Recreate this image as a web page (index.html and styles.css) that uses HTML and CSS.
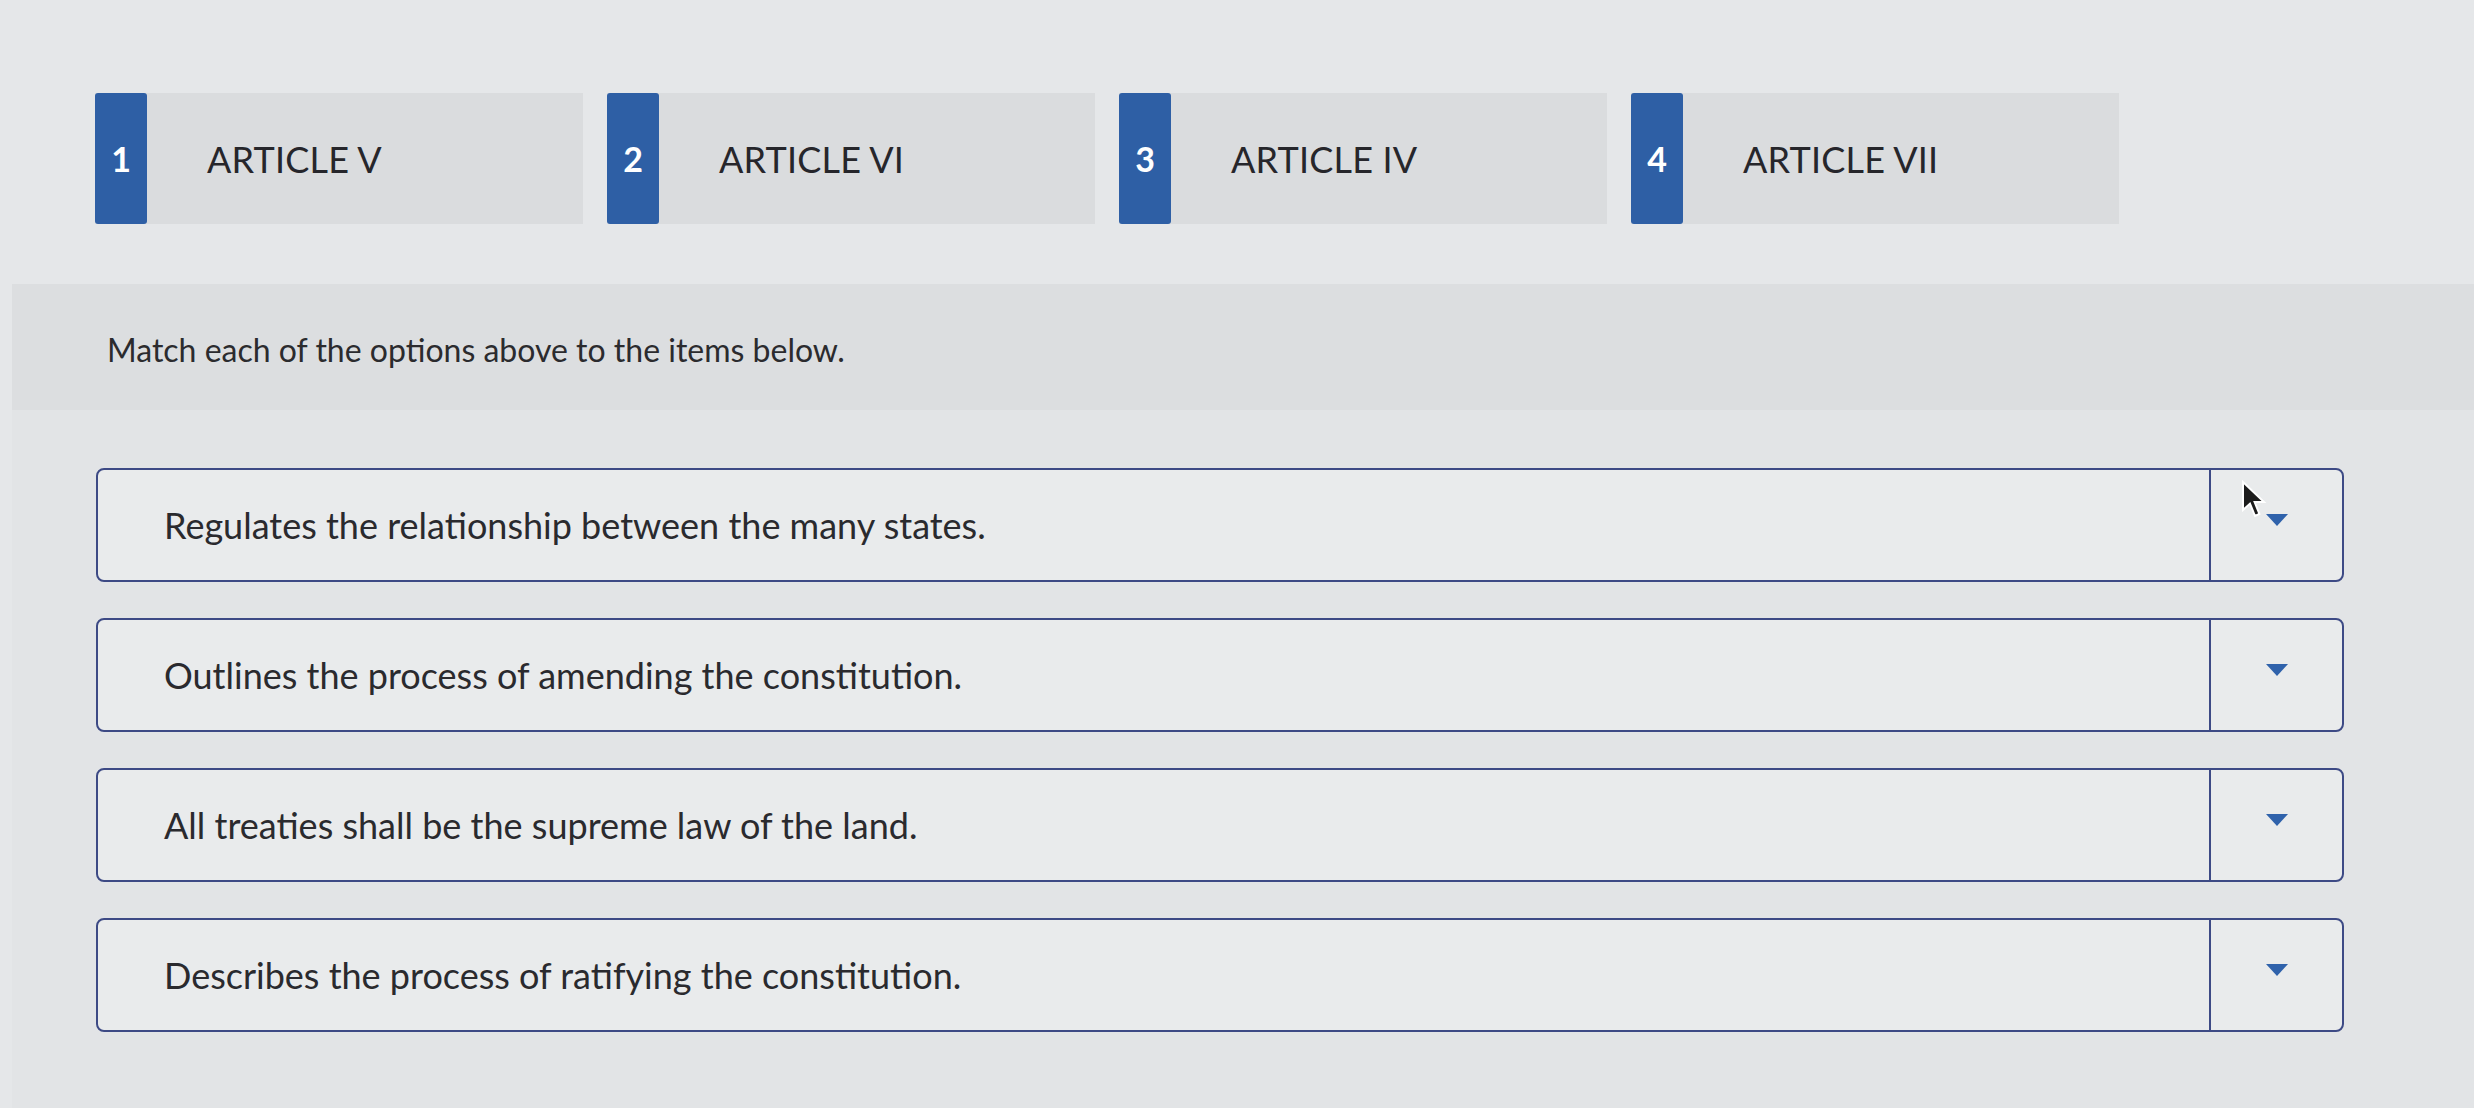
FILE: index.html
```html
<!DOCTYPE html>
<html lang="en">
<head>
<meta charset="utf-8">
<title>Matching</title>
<link rel="stylesheet" href="styles.css">
</head>
<body>
<div class="page">
  <div class="choices">
    <div class="choice"><span class="badge">1</span><span class="label">ARTICLE V</span></div>
    <div class="choice"><span class="badge">2</span><span class="label">ARTICLE VI</span></div>
    <div class="choice"><span class="badge">3</span><span class="label">ARTICLE IV</span></div>
    <div class="choice"><span class="badge">4</span><span class="label">ARTICLE VII</span></div>
  </div>
  <section class="panel">
    <div class="prompt">Match each of the options above to the items below.</div>
    <div class="rows">
      <div class="row">
        <div class="row-text">Regulates the relationship between the many states.</div>
        <div class="drop"><span class="tri"></span>
          <svg class="cursor" width="26" height="40" viewBox="0 0 13 20"><path d="M1 1 L1 15 L4.5 11.8 L7 18 L9.2 17 L6.8 11 L11.5 11 Z" fill="#1c1c1c" stroke="#ffffff" stroke-width="1"/></svg>
        </div>
      </div>
      <div class="row">
        <div class="row-text">Outlines the process of amending the constitution.</div>
        <div class="drop"><span class="tri"></span></div>
      </div>
      <div class="row">
        <div class="row-text">All treaties shall be the supreme law of the land.</div>
        <div class="drop"><span class="tri"></span></div>
      </div>
      <div class="row">
        <div class="row-text">Describes the process of ratifying the constitution.</div>
        <div class="drop"><span class="tri"></span></div>
      </div>
    </div>
  </section>
</div>
</body>
</html>
```
FILE: styles.css
```css
html, body {
  margin: 0;
  padding: 0;
}
body {
  background: #e5e7e9;
  font-family: "Lato", "Liberation Sans", sans-serif;
  color: #2b2b2e;
  width: 2474px;
  height: 1108px;
  overflow: hidden;
}
.page {
  display: flex;
  flex-direction: column;
}
.choices {
  display: flex;
  gap: 24px;
  padding: 93px 0 0 95px;
  height: 131px;
}
.choice {
  width: 488px;
  height: 131px;
  background: #dadcde;
  display: flex;
  align-items: center;
}
.badge {
  width: 52px;
  height: 131px;
  background: #2e5fa5;
  border-radius: 3px;
  color: #ffffff;
  font-weight: 700;
  font-size: 34px;
  display: flex;
  align-items: center;
  justify-content: center;
}
.label {
  margin-left: 60px;
  font-size: 36px;
  color: #26262b;
  letter-spacing: 0.2px;
}
.panel {
  margin: 60px 0 0 12px;
  background: #e2e4e6;
  flex: 1;
  padding-bottom: 80px;
}
.prompt {
  height: 126px;
  background: #dcdee0;
  display: flex;
  align-items: center;
  padding-left: 95px;
  padding-top: 4px;
  box-sizing: border-box;
  font-size: 32px;
  color: #2b2b2e;
}
.rows {
  display: flex;
  flex-direction: column;
  gap: 36px;
  padding: 58px 0 0 84px;
}
.row {
  width: 2248px;
  height: 114px;
  box-sizing: border-box;
  border: 2px solid #3d4a85;
  border-radius: 8px;
  background: #e9ebec;
  display: flex;
  align-items: stretch;
}
.row-text {
  flex: 1;
  display: flex;
  align-items: center;
  padding-left: 66px;
  font-size: 36px;
  color: #2a2a2e;
}
.drop {
  width: 131px;
  border-left: 2px solid #3d4a85;
  display: flex;
  align-items: center;
  justify-content: center;
  padding-bottom: 10px;
  position: relative;
}
.tri {
  width: 0;
  height: 0;
  border-left: 11px solid transparent;
  border-right: 11px solid transparent;
  border-top: 12px solid #2f62ab;
}
.cursor {
  position: absolute;
  left: 30px;
  top: 10px;
}
```
